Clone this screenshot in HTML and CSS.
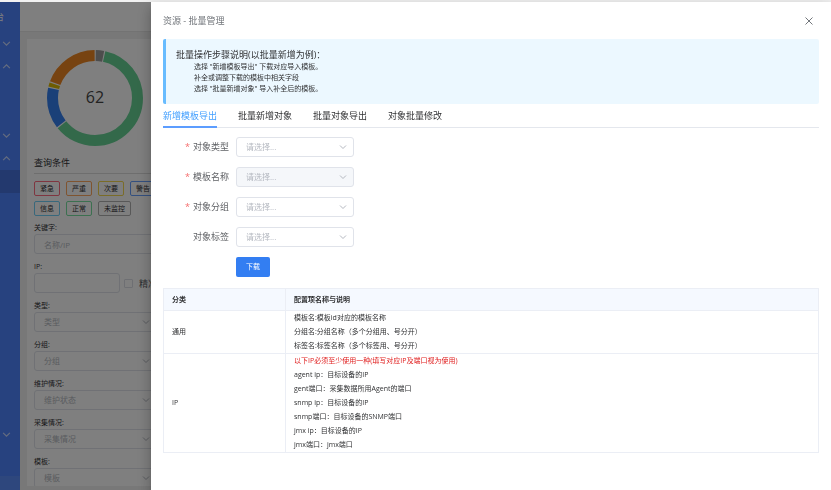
FILE: index.html
```html
<!DOCTYPE html>
<html lang="zh-CN">
<head>
<meta charset="utf-8">
<title>资源 - 批量管理</title>
<link rel="stylesheet" href="styles.css">
</head>
<body>
<svg class="defs" aria-hidden="true">
  <symbol id="down" viewBox="0 0 8 8"><path d="M1 2.5 4 5.5 7 2.5"/></symbol>
  <symbol id="up" viewBox="0 0 8 8"><path d="M1 5.5 4 2.5 7 5.5"/></symbol>
</svg>
<div class="app">
  <nav class="nav">
    <div class="brand">台</div>
    <div class="item"><svg><use href="#down"/></svg></div>
    <div class="item"><svg><use href="#up"/></svg></div>
    <div class="item"></div>
    <div class="item"></div>
    <div class="item"><svg><use href="#down"/></svg></div>
    <div class="item"><svg><use href="#up"/></svg></div>
    <div class="item active"></div>
    <div class="submenu"></div>
    <div class="item"><svg><use href="#down"/></svg></div>
    <div class="nav-foot"></div>
  </nav>
  <div class="page">
    <header class="topbar"></header>
    <aside class="filters">
      <svg class="donut" viewBox="0 0 98 98" role="img" aria-label="62">
        <g fill="none" stroke-width="11" transform="rotate(-90 49 49)">
          <circle cx="49" cy="49" r="42.5" pathLength="360" stroke="#9a9a9a" stroke-dasharray="10 350" stroke-dashoffset="-1"/>
          <circle cx="49" cy="49" r="42.5" pathLength="360" stroke="#67d295" stroke-dasharray="218.500 141.500" stroke-dashoffset="-12.500"/>
          <circle cx="49" cy="49" r="42.5" pathLength="360" stroke="#3580f0" stroke-dasharray="50 310" stroke-dashoffset="-232.500"/>
          <circle cx="49" cy="49" r="42.5" pathLength="360" stroke="#dcb800" stroke-dasharray="5 355" stroke-dashoffset="-284"/>
          <circle cx="49" cy="49" r="42.5" pathLength="360" stroke="#ee8722" stroke-dasharray="69 291" stroke-dashoffset="-290.500"/>
        </g>
        <text x="49" y="54" text-anchor="middle">62</text>
      </svg>
      <h2>查询条件</h2>
      <div class="tags">
        <button class="tag red">紧急</button>
        <button class="tag orange">严重</button>
        <button class="tag yellow">次要</button>
        <button class="tag blue">警告</button>
        <button class="tag cyan">信息</button>
        <button class="tag green">正常</button>
        <button class="tag gray">未监控</button>
      </div>
      <div class="field">
        <label for="kw">关键字:</label>
        <input class="control" id="kw" type="text" placeholder="名称/IP">
      </div>
      <div class="field">
        <label for="ip">IP:</label>
        <div class="ip-row">
          <input class="control" id="ip" type="text">
          <label class="exact"><input type="checkbox">精准</label>
        </div>
      </div>
      <div class="field">
        <label for="type">类型:</label>
        <div class="select"><select class="control" id="type"><option>类型</option></select><svg><use href="#down"/></svg></div>
      </div>
      <div class="field">
        <label for="group">分组:</label>
        <div class="select"><select class="control" id="group"><option>分组</option></select><svg><use href="#down"/></svg></div>
      </div>
      <div class="field">
        <label for="maint">维护情况:</label>
        <div class="select"><select class="control" id="maint"><option>维护状态</option></select><svg><use href="#down"/></svg></div>
      </div>
      <div class="field">
        <label for="collect">采集情况:</label>
        <div class="select"><select class="control" id="collect"><option>采集情况</option></select><svg><use href="#down"/></svg></div>
      </div>
      <div class="field">
        <label for="tpl">模板:</label>
        <div class="select"><select class="control" id="tpl"><option>模板</option></select><svg><use href="#down"/></svg></div>
      </div>
    </aside>
  </div>
</div>
<div class="mask"></div>
<section class="drawer" role="dialog" aria-labelledby="drawer-title">
  <header class="drawer-head">
    <h1 id="drawer-title">资源 - 批量管理</h1>
    <button class="close" aria-label="关闭"><svg viewBox="0 0 8 8"><path d="M.5.5l7 7M7.500.5l-7 7"/></svg></button>
  </header>
  <div class="notice">
    <h2>批量操作步骤说明(以批量新增为例)：</h2>
    <p>选择 "新增模板导出" 下载对应导入模板。</p>
    <p>补全或调整下载的模板中相关字段</p>
    <p>选择 "批量新增对象" 导入补全后的模板。</p>
  </div>
  <div class="tabs" role="tablist">
    <button role="tab" aria-selected="true">新增模板导出</button>
    <button role="tab" aria-selected="false">批量新增对象</button>
    <button role="tab" aria-selected="false">批量对象导出</button>
    <button role="tab" aria-selected="false">对象批量修改</button>
  </div>
  <form class="form">
    <label class="required" for="f1">对象类型</label>
    <div class="select"><select class="control" id="f1"><option>请选择...</option></select><svg><use href="#down"/></svg></div>
    <label class="required" for="f2">模板名称</label>
    <div class="select"><select class="control" id="f2" disabled><option>请选择...</option></select><svg><use href="#down"/></svg></div>
    <label class="required" for="f3">对象分组</label>
    <div class="select"><select class="control" id="f3"><option>请选择...</option></select><svg><use href="#down"/></svg></div>
    <label for="f4">对象标签</label>
    <div class="select"><select class="control" id="f4"><option>请选择...</option></select><svg><use href="#down"/></svg></div>
    <button class="primary" type="button">下载</button>
  </form>
  <table>
    <thead><tr><th class="kind">分类</th><th>配置项名称与说明</th></tr></thead>
    <tbody>
      <tr>
        <td>通用</td>
        <td>
          <div>模板名:模板id对应的模板名称</div>
          <div>分组名:分组名称（多个分组用、号分开）</div>
          <div>标签名:标签名称（多个标签用、号分开）</div>
        </td>
      </tr>
      <tr>
        <td>IP</td>
        <td>
          <div class="warn">以下IP必须至少使用一种(填写对应IP及端口视为使用)</div>
          <div>agent ip：目标设备的IP</div>
          <div>gent端口：采集数据所用Agent的端口</div>
          <div>snmp ip：目标设备的IP</div>
          <div>snmp端口：目标设备的SNMP端口</div>
          <div>jmx ip：目标设备的IP</div>
          <div>jmx端口：jmx端口</div>
        </td>
      </tr>
    </tbody>
  </table>
</section>
</body>
</html>
```
FILE: styles.css
```css
* { box-sizing: border-box; }

body {
  margin: 0;
  height: 100vh;
  overflow: hidden;
  border-top: 2px solid #f2f2f2;
  color: #303133;
  font: 7px/14px "Open Sans", "Noto Sans CJK SC", sans-serif;
}

h1, h2, p { margin: 0; font-weight: 400; }
button, input, select { margin: 0; font: inherit; color: inherit; }
button { cursor: pointer; }

svg { flex: none; fill: none; stroke: currentColor; }
.defs { position: absolute; width: 0; height: 0; }

/* Page behind the drawer */
.app { display: flex; height: 100%; }

.nav {
  display: flex;
  flex-direction: column;
  flex: none;
  width: 20px;
  background: #4f84ff;
  color: #fff;
}
.brand { height: 30px; font-size: 9px; line-height: 30px; direction: rtl; padding-right: 16px; }
.item { display: flex; align-items: center; flex: none; height: 23px; padding-left: 2px; }
.item svg { width: 9px; height: 9px; opacity: .7; }
.active { background: #4673dc; }
.submenu { height: 230px; }
.nav-foot { flex: 1; margin-top: 30px; background: #5c8ffb; }

.page {
  display: flex;
  flex-direction: column;
  flex: 1;
  padding-bottom: 4px;
  background: #f0f0f0;
}
.topbar { flex: none; height: 30px; background: #fff; border-bottom: 1px solid #e6e6e6; }

.filters {
  flex: 1;
  min-height: 0;
  overflow: hidden;
  width: 137px;
  margin: 7px 0 0 7px;
  padding: 10px 7px 0;
  background: #fff;
}
.donut { display: block; width: 98px; height: 98px; margin: 0 12px 9px; }
.donut text { fill: #464646; stroke: none; font-size: 16px; }
.filters h2 {
  height: 18px;
  margin-bottom: 7px;
  border-bottom: 1px solid #dcdcdc;
  font-size: 9px;
  line-height: 14px;
}

.tags { display: flex; flex-wrap: wrap; gap: 5px 6px; margin-bottom: 5px; }
.tag {
  height: 15px;
  padding: 0 5px;
  border: 1px solid;
  border-radius: 2px;
  background: none;
  line-height: 13px;
}
.red { border-color: #ff6c80; }
.orange { border-color: #ffa860; }
.yellow { border-color: #f4d850; }
.blue { border-color: #68a0ff; }
.cyan { border-color: #70d0f8; }
.green { border-color: #78e0a0; }
.gray { border-color: #b0b0b0; }

.field { margin-bottom: 6px; }
.field label { display: block; line-height: 13px; }
.control {
  display: block;
  width: 100%;
  height: 20px;
  padding: 0 9px;
  border: 1px solid #e0e3ea;
  border-radius: 3px;
  background: #fff;
  color: #b4b8c0;
  font-size: 8px;
  appearance: none;
}
.control::placeholder { color: #b4b8c0; }
.control:disabled { background: #f5f7fa; opacity: 1; }
.select { position: relative; }
.select svg {
  position: absolute;
  top: 6px;
  right: 7px;
  width: 8px;
  height: 8px;
  color: #b4b8c0;
  pointer-events: none;
}

.ip-row { display: flex; align-items: center; gap: 4px; }
.ip-row .control { flex: none; width: 86px; }
.field .exact { display: flex; align-items: center; gap: 6px; font-size: 9px; white-space: nowrap; color: #606266; }
.exact input {
  flex: none;
  width: 9px;
  height: 9px;
  border: 1px solid #dcdfe6;
  border-radius: 1px;
  appearance: none;
}

.mask { position: fixed; inset: 2px 0 0; background: rgba(0, 0, 0, .5); }

/* Drawer */
.drawer {
  position: fixed;
  inset: 2px 0 0 151px;
  overflow: auto;
  padding: 0 12px;
  background: #fff;
  box-shadow: 0 4px 5px -2px rgba(0, 0, 0, .2), 0 8px 12px 1px rgba(0, 0, 0, .14), 0 3px 15px 2px rgba(0, 0, 0, .12);
}
.drawer-head { display: flex; align-items: center; justify-content: space-between; height: 37px; }
.drawer-head h1 { color: #72767b; font-size: 9px; }
.close { display: flex; padding: 6px; border: 0; background: none; color: #72767b; }
.close svg { width: 8px; height: 8px; }

.notice {
  padding: 9px 10px 10px;
  border-left: 3px solid #68bcff;
  border-radius: 2px;
  background: #ecf8ff;
  line-height: 11px;
}
.notice h2 { font-size: 9px; line-height: 13px; }
.notice p { padding-left: 18px; }

.tabs { display: flex; gap: 21px; border-bottom: 1px solid #e4e7ed; margin-bottom: 9px; }
.tabs button {
  height: 24px;
  margin-bottom: -1px;
  padding: 2px 0 0;
  border: 0;
  border-bottom: 2px solid transparent;
  background: none;
  font-size: 9px;
}
.tabs [aria-selected="true"] { border-color: #5c9dff; color: #409eff; }

.form {
  display: grid;
  grid-template-columns: 66px 118px;
  gap: 10px 7px;
  align-items: center;
  margin-bottom: 11px;
}
.form label { color: #606266; font-size: 9px; text-align: right; }
.required::before { content: "*"; margin-right: 3px; color: #f56c6c; }
.primary {
  grid-column: 2;
  justify-self: start;
  width: 34px;
  height: 20px;
  padding: 0;
  border: 0;
  border-radius: 2px;
  background: #337ef2;
  color: #fff;
}

table { width: 100%; border-collapse: collapse; }
th, td { padding: 0 8px; border: 1px solid #ebeef5; text-align: left; }
th { height: 22px; background: #f5f9ff; font-weight: 700; }
.kind { width: 122px; }
.warn { color: #e02020; }
```
